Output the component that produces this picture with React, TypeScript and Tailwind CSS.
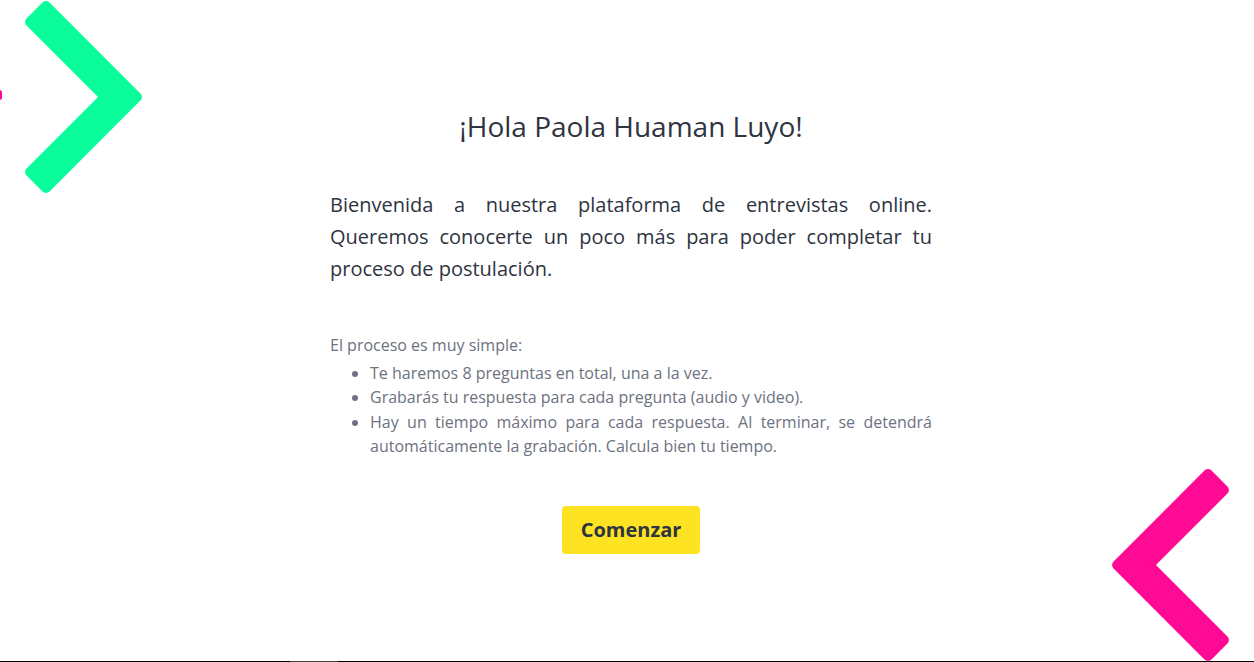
import React from "react";

function Chevron({ color, className }: { color: string; className?: string }) {
  return (
    <svg viewBox="0 0 150 200" width="150" height="200" className={className}>
      <polygon
        points="48,6.1 138.9,97 48,187.9 32.07,172 107.07,97 32.07,22"
        fill={color}
        stroke={color}
        strokeWidth="10"
        strokeLinejoin="round"
      />
    </svg>
  );
}

const steps = [
  "Te haremos 8 preguntas en total, una a la vez.",
  "Grabarás tu respuesta para cada pregunta (audio y video).",
  "Hay un tiempo máximo para cada respuesta. Al terminar, se detendrá automáticamente la grabación. Calcula bien tu tiempo.",
];

export default function App() {
  return (
    <div
      className="relative h-[662px] w-full overflow-hidden bg-white"
      style={{ fontFamily: '"Open Sans", "Noto Sans", sans-serif' }}
    >
      {/* decorative chevrons */}
      <Chevron color="#0bfd9b" className="absolute -left-[2px] top-0" />
      <Chevron color="#ff0a94" className="absolute left-[1106px] top-[468px] -scale-x-100" />
      <div className="absolute -left-[3px] top-[90px] h-[10px] w-[5px] rounded-full bg-[#ff0a94]" />

      <div className="relative flex justify-center pl-[8px] pt-[110px]">
        <div className="flex w-[602px] flex-col">
          <h1 className="text-center text-[28px] leading-[32px] text-[#2e3440]">
            ¡Hola Paola Huaman Luyo!
          </h1>

          <p className="mt-[47px] text-justify text-[20px] leading-[32px] text-[#2e3440]">
            Bienvenida a nuestra plataforma de entrevistas online. Queremos conocerte un poco más para poder completar tu
            proceso de postulación.
          </p>

          <div className="mt-[48px] text-[16px] leading-[24px] text-[#6c7280]">
            <p className="mb-[4px]">El proceso es muy simple:</p>
            <ul className="list-disc pl-[40px] text-justify">
              {steps.map((s) => (
                <li key={s} className="leading-[24.3px]">
                  {s}
                </li>
              ))}
            </ul>
          </div>

          <div className="mt-[48px] flex justify-center">
            <button className="h-[48px] rounded-[4px] bg-[#fde322] px-[19px] text-[20px] font-bold text-[#2e3440]">
              Comenzar
            </button>
          </div>
        </div>
      </div>

      <div className="absolute bottom-0 left-0 flex h-px w-full bg-black">
        <div className="ml-[290px] h-px w-[48px] bg-[#444]" />
      </div>
    </div>
  );
}
